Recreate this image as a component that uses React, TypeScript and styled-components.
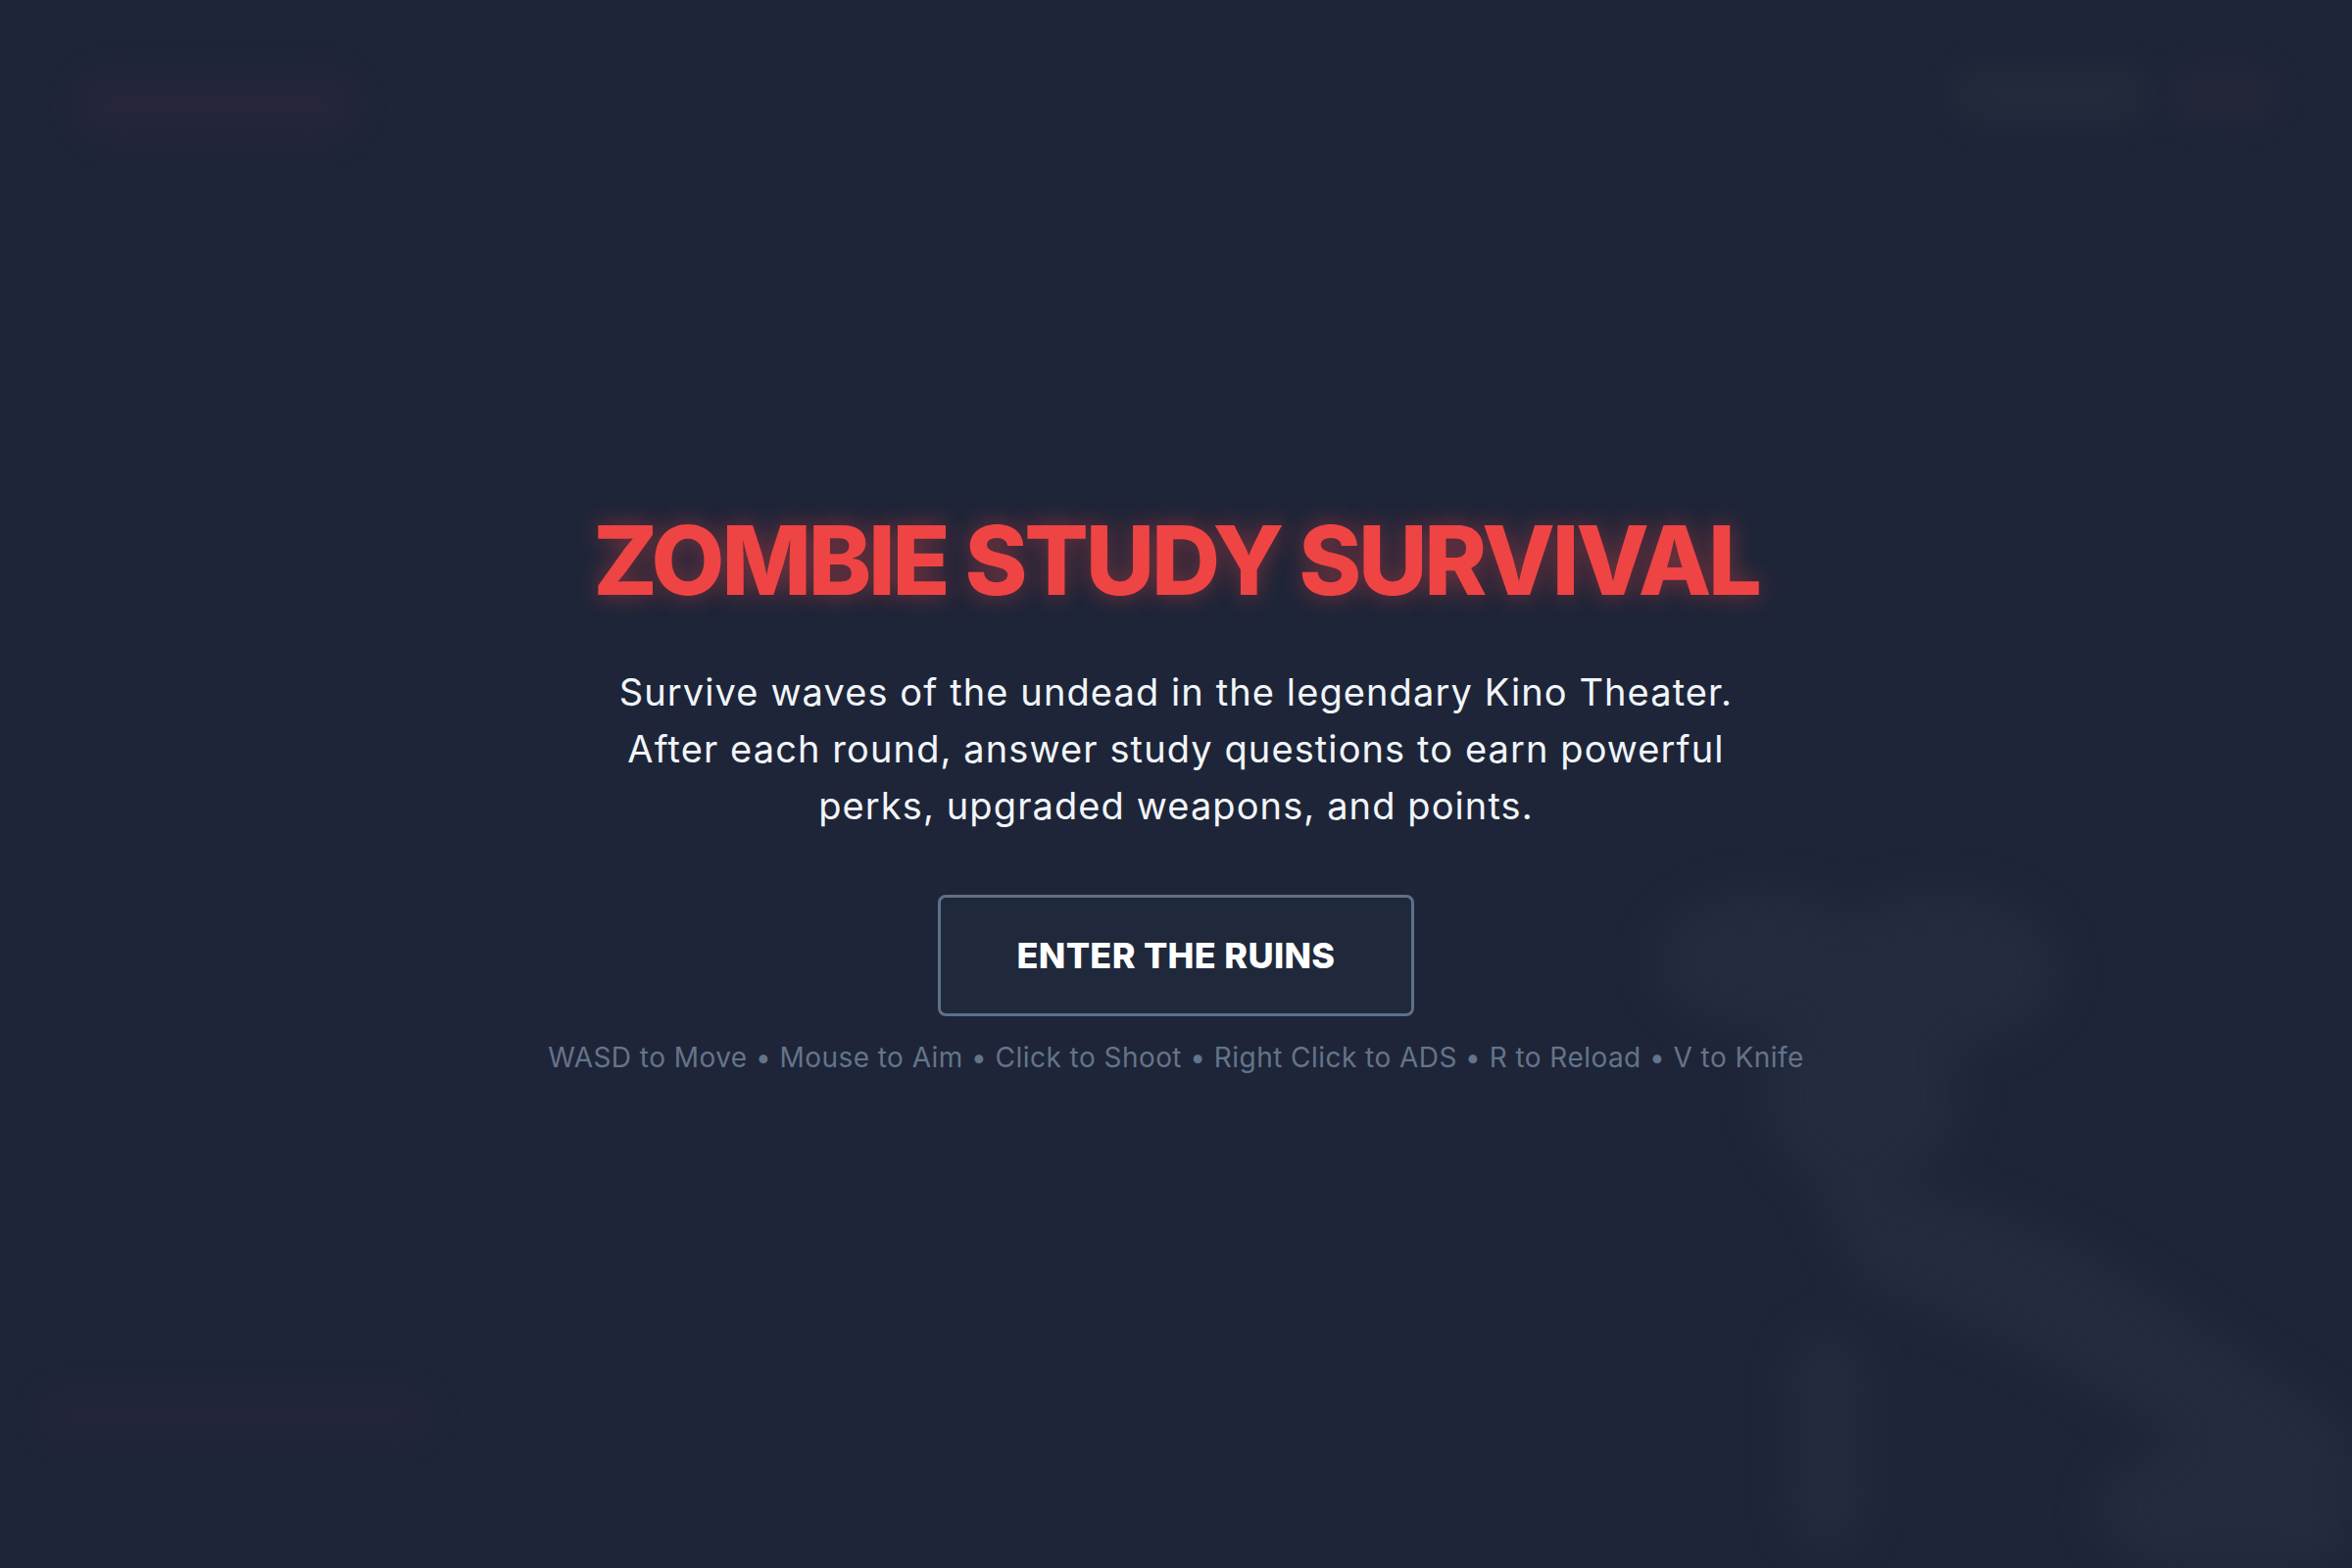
import React from 'react'
import styled, { createGlobalStyle } from 'styled-components'

const GlobalStyle = createGlobalStyle`
  html, body {
    margin: 0;
    padding: 0;
    background: #1e2538;
  }
  * {
    box-sizing: border-box;
  }
`

const Screen = styled.div`
  position: relative;
  width: 100vw;
  height: 100vh;
  overflow: hidden;
  background: #1e2538;
  font-family: 'Inter', 'Noto Sans', sans-serif;
`

/* blurred game scene sitting behind the menu */
const Scene = styled.div`
  position: absolute;
  inset: 0;
  display: flex;
  flex-direction: column;
  justify-content: space-between;
  padding: 72px 76px 132px 40px;
  filter: blur(14px);
  pointer-events: none;
`

const Hud = styled.div`
  display: flex;
  justify-content: space-between;
  align-items: flex-start;
  padding-left: 36px;
`

const HudGroup = styled.div`
  display: flex;
  gap: 22px;
  margin-top: -4px;
`

const HudPill = styled.div<{ $w: number; $h: number; $tint: string }>`
  width: ${(p) => p.$w}px;
  height: ${(p) => p.$h}px;
  border-radius: 40px;
  background: ${(p) => p.$tint};
`

const ZombieFigure = styled.svg`
  position: absolute;
  right: 0;
  bottom: 0;
  width: 800px;
  height: 720px;
  filter: blur(22px);
`

const Menu = styled.div`
  position: relative;
  z-index: 1;
  height: 100%;
  display: flex;
  flex-direction: column;
  align-items: center;
  justify-content: center;
  text-align: center;
  padding-top: 18px;
`

const Title = styled.h1`
  margin: 0;
  font-family: 'Inter', sans-serif;
  font-weight: 800;
  font-size: 97px;
  line-height: 1.1;
  letter-spacing: -3.2px;
  color: #ef4444;
  text-shadow: 0 0 24px rgba(239, 68, 68, 0.45);
`

const Blurb = styled.p`
  margin: 52px 0 0;
  max-width: 1152px;
  font-family: 'Inter', sans-serif;
  font-size: 38px;
  line-height: 58px;
  font-weight: 400;
  letter-spacing: 1.1px;
  color: #f1f5f9;
`

const EnterButton = styled.button`
  margin-top: 62px;
  width: 486px;
  height: 124px;
  background: #1f293b;
  border: 3px solid #5f7089;
  border-radius: 8px;
  color: #ffffff;
  font-family: 'Inter', sans-serif;
  font-weight: 800;
  font-size: 36px;
  letter-spacing: 0.3px;
  cursor: pointer;
`

const Controls = styled.div`
  margin-top: 22px;
  font-family: 'Inter', sans-serif;
  font-size: 28px;
  line-height: 40px;
  letter-spacing: 0.45px;
  color: #64748b;
`

const controls = [
  'WASD to Move',
  'Mouse to Aim',
  'Click to Shoot',
  'Right Click to ADS',
  'R to Reload',
  'V to Knife',
]

export default function App() {
  return (
    <Screen>
      <GlobalStyle />
      <Scene>
        <Hud>
          <HudPill $w={290} $h={72} $tint="rgba(48, 40, 62, 0.4)" />
          <HudGroup>
            <HudPill $w={200} $h={58} $tint="rgba(40, 50, 66, 0.4)" />
            <HudPill $w={110} $h={58} $tint="rgba(50, 42, 62, 0.35)" />
          </HudGroup>
        </Hud>
        <HudPill $w={400} $h={48} $tint="rgba(46, 40, 62, 0.35)" />
      </Scene>
      <ZombieFigure viewBox="0 0 800 720">
        <g fill="#2a3448" opacity="0.45">
          <ellipse cx="200" cy="100" rx="110" ry="70" />
          <ellipse cx="380" cy="110" rx="120" ry="80" />
          <ellipse cx="300" cy="240" rx="100" ry="90" />
          <path d="M250 330 C 380 320, 520 380, 640 470 L 800 580 L 800 700 L 700 640 C 560 540, 420 470, 300 430 Z" />
          <rect x="230" y="480" width="70" height="220" rx="35" />
          <ellipse cx="680" cy="660" rx="140" ry="70" />
        </g>
      </ZombieFigure>
      <Menu>
        <Title>ZOMBIE STUDY SURVIVAL</Title>
        <Blurb>
          Survive waves of the undead in the legendary Kino Theater. After each round, answer study
          questions to earn powerful perks, upgraded weapons, and points.
        </Blurb>
        <EnterButton>ENTER THE RUINS</EnterButton>
        <Controls>{controls.join(' • ')}</Controls>
      </Menu>
    </Screen>
  )
}
